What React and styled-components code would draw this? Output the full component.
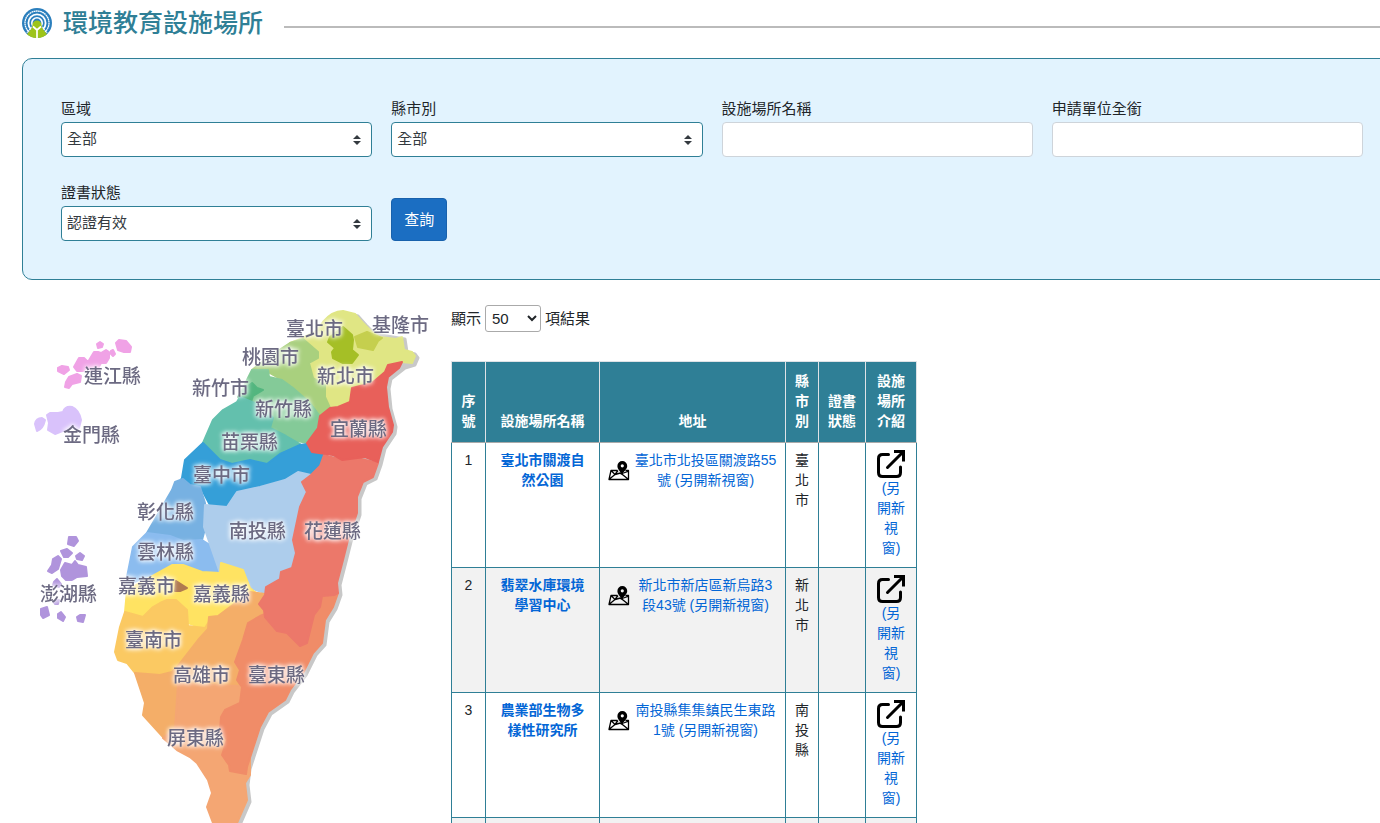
import React, { useState } from 'react'
import styled, { createGlobalStyle } from 'styled-components'

const GlobalStyle = createGlobalStyle`
  *, *::before, *::after {
    box-sizing: border-box;
  }

  body {
    margin: 0;
    overflow-x: hidden;
    background-color: #ffffff;
    color: #212529;
    font-family: "Liberation Sans", "Noto Sans CJK TC", sans-serif;
    font-size: 15px;
    line-height: 22px;
  }
`

const Page = styled.main`
  width: 100%;
  margin-left: 22px;
  padding-top: 5px;
`

const TitleBar = styled.header`
  display: flex;
  align-items: center;
  height: 36px;
  margin-bottom: 17px;
`

const Title = styled.h1`
  margin: 0 21px 0 11px;
  color: #2f7f96;
  font-size: 25px;
  font-weight: 500;
  line-height: 36px;
  white-space: nowrap;
`

const TitleRule = styled.span`
  flex: 1;
  height: 2px;
  margin-top: 8px;
  background-color: #bbbbbb;
`

const SearchPanel = styled.form`
  display: grid;
  grid-template-columns: repeat(4, 1fr);
  column-gap: 19px;
  row-gap: 24px;
  padding: 38px;
  background-color: #e2f3fe;
  border: 1px solid #2f7f96;
  border-radius: 10px;
`

const Field = styled.div`
  display: flex;
  flex-direction: column;
`

const Label = styled.label`
  margin-bottom: 1px;
  line-height: 24px;
`

const selectArrow = encodeURIComponent(
  '<svg xmlns="http://www.w3.org/2000/svg" viewBox="0 0 4 5"><path fill="#343a40" d="M2 0L0 2h4zm0 5L0 3h4z"/></svg>'
)

const Select = styled.select`
  appearance: none;
  width: 100%;
  height: 35px;
  padding: 0 28px 2px 5px;
  border: 1px solid #2f7f96;
  border-radius: 4px;
  background: #ffffff url("data:image/svg+xml,${selectArrow}") no-repeat right 10px center / 8px 10px;
  color: #343a40;
  font: inherit;
`

const Input = styled.input`
  width: 100%;
  height: 35px;
  padding: 0 10px;
  border: 1px solid #ced4da;
  border-radius: 4px;
  background-color: #ffffff;
  font: inherit;
`

const SearchButton = styled.button`
  align-self: end;
  justify-self: start;
  height: 43px;
  padding: 0 12px;
  border: 1px solid #1861ac;
  border-radius: 4px;
  background-color: #1b6ec2;
  color: #ffffff;
  font: inherit;
  cursor: pointer;

  &:hover {
    background-color: #1861ac;
  }
`

const Content = styled.section`
  display: flex;
  align-items: flex-start;
  gap: 11px;
  padding-top: 25px;
`

const MapSvg = styled.svg`
  flex: none;
  display: block;
`

const Region = styled.path`
  fill: ${props => props.$color};
  stroke: ${props => props.$color};
  stroke-width: 2;
  stroke-linejoin: round;
`

const MapLabel = styled.text`
  fill: #6c6a82;
  font-size: 19px;
  font-weight: 500;
  filter: drop-shadow(0 0 2px #ffffff) drop-shadow(0 0 2px #ffffff);
`

const LengthRow = styled.div`
  display: flex;
  align-items: center;
  gap: 4px;
  height: 27px;
  margin-bottom: 29px;
`

const LengthSelect = styled.select`
  width: 56px;
  height: 27px;
  padding: 2px;
  border: 1px solid #aaaaaa;
  border-radius: 3px;
  background-color: #ffffff;
  color: #212529;
  font: inherit;
`

const Table = styled.table`
  width: 466px;
  table-layout: fixed;
  border-collapse: collapse;
  font-size: 14px;
  line-height: 20px;
  text-align: center;
`

const Col = styled.col`
  width: ${props => props.$width}px;
`

const HeadCell = styled.th`
  padding: 9px 8px 11px;
  border: 1px solid #dee2e6;
  border-bottom-color: #aaaaaa;
  background-color: #2f7f96;
  color: #ffffff;
  font-weight: 700;
  vertical-align: bottom;
`

const Row = styled.tr`
  height: 125px;

  &:nth-child(even) {
    background-color: #f2f2f2;
  }
`

const Cell = styled.td`
  padding: 7px ${props => (props.$narrow ? 10 : 8)}px 9px;
  border: 1px solid #2f7f96;
  vertical-align: top;
`

const Link = styled.a`
  color: #0366d6;
  font-weight: ${props => (props.$strong ? 700 : 400)};
  text-decoration: none;

  &:hover {
    text-decoration: underline;
  }
`

const Address = styled.div`
  display: flex;
  gap: 4px;

  svg {
    flex: none;
    margin-top: 10px;
  }

  a {
    flex: 1;
  }
`

const OpenLink = styled(Link)`
  svg {
    display: block;
    margin: 0 auto;
  }
`

const regions = [
  ['#e0e684', 'M290 343L303 338L316 331L323 322Q332 311 343 311L355 314L363 323L372 332L380 337L396 339L402 337L404 350L412 352L415 356L412 363L402 362L394 363L385 372L373 380L372 386L352 388L351 401L338 407L330 408L325 397L325 385L313 378L310 365L318 357L315 350L302 343Z'],
  ['#a5bf26', 'M330 337L343 327L352 335L353 340L352 350L358 355L352 363L343 363L333 358L332 352L335 348L328 342Z'],
  ['#c5cf4e', 'M355 337L367 332L382 338L378 341L373 350L358 347Z'],
  ['#a9d07e', 'M252 370L267 358L290 343L303 339L318 352L318 358L309 363L313 378L325 385L325 397L330 408L318 428L300 416L282 380L268 372Z'],
  ['#84ca98', 'M238 397L243 388L252 370L268 370L269 377L282 380L293 388L310 403L319 415L318 428L307 443L293 440L270 428L272 420L250 412Z'],
  ['#53b67f', 'M243 390L252 383L257 388L263 390L253 396L251 402L243 397Z'],
  ['#63c0ad', 'M203 443L213 420L223 410L237 402L240 397L262 406L273 418L270 428L286 436L300 444L280 454L267 464L250 460L232 464L220 460Z'],
  ['#359fd8', 'M182 478L185 460L203 443L220 460L232 464L250 460L267 464L280 454L300 445L307 444L312 452L324 455L320 466L311 475L298 472L285 480L260 487L237 492L227 507L210 505L202 490L180 482Z'],
  ['#77b1e2', 'M147 533L172 490L175 482L183 479L190 485L200 487L205 503L206 525L202 540L183 542L170 537Z'],
  ['#8bbcef', 'M127 585L127 577L133 547L147 533L170 536L183 541L202 540L210 545L220 573L202 572L183 565L172 565L163 570Z'],
  ['#adcdec', 'M285 480L298 472L311 475L302 482L307 492L300 507L293 540L296 553L292 568L281 572L280 580L267 587L265 593L250 588L243 570L222 563L220 573L204 527L205 505L227 507L237 492L260 487Z'],
  ['#ffe362', 'M127 590L163 570L172 565L183 565L202 572L220 573L221 563L243 570L250 588L256 593L240 604L217 617L203 628L188 623L180 605L143 618L125 612Z'],
  ['#b07a50', 'M176 581L187 588L180 591L175 591Z'],
  ['#fbc962', 'M115 652L120 627L125 612L143 617L153 607L160 603L167 600L176 600L187 610L188 626L205 628L212 617L212 640L177 667L172 673L160 676L135 673L127 663L118 660Z'],
  ['#f4ae68', 'M135 673L160 675L172 672L177 667L198 640L208 629L209 617L218 616L230 607L250 592L265 594L268 614L250 640L243 697L175 723L178 745L163 737L143 715L145 703Z'],
  ['#f4a673', 'M178 684L240 686L250 700L250 775L245 783L247 800L237 823L237 840L215 840L213 823L207 807L212 793L208 780L197 763L190 757L177 750L163 738L175 728Z'],
  ['#f08c68', 'M265 614L300 600L335 595L338 593L333 607L325 620L322 643L313 653L303 673L290 690L285 700L268 712L260 727L247 767L246 774L230 771L229 765L222 755L227 740L220 730L221 717L225 710L240 703L242 687L237 680L240 670L235 662L243 640L248 623L260 616Z'],
  ['#ec786a', 'M324 455L342 460L353 457L378 463L373 477L363 482L357 497L357 513L348 540L343 560L337 583L338 593L334 595L322 596L320 607L314 615L307 643L300 646L287 633L277 631L265 617L264 610L259 604L265 595L266 587L280 579L281 572L292 568L296 553L293 540L300 507L307 492L302 482L311 475L320 466Z'],
  ['#e8605a', 'M402 362L399 368L388 377L386 387L388 407L393 425L392 432L382 447L378 462L365 457L342 460L333 455L312 452L307 443L318 428L320 416L330 408L338 407L350 402L352 388L372 383L385 372L388 365Z']
]

const coastline =
  'M343 311L355 314L363 323L372 332L402 337L404 350L412 352L415 356L412 363L402 366L388 377L386 387L388 407L393 425L392 432L382 447L378 463L373 477L363 482L357 497L357 513L348 540L343 560L337 583L338 593L333 607L325 620L322 643L313 653L303 673L290 690L285 700L268 712L260 727L247 767L245 783L247 800L237 823L237 840L215 840L230 760L280 600L340 420Z'

const islands = [
  // 連江縣
  ['#f0a2e6', 'M58 368L62 366L68 367L69 370L64 374L58 371ZM66 382L69 377L77 374L81 376L80 382L72 384L69 388L65 387ZM74 367L79 358L84 358L88 362L94 352L98 352L101 353L106 350L109 352L109 358L106 363L101 363L96 372L86 368L83 371L77 371ZM97 344L100 342L103 344L102 347L98 348ZM111 351L113 350L115 354L113 356L111 354ZM116 343L119 340L126 341L131 347L130 352L124 352L118 350Z'],
  // 金門縣
  ['#d9c2fb', 'M35 424Q36 418 42 418L45 420Q43 429 37 431ZM47 415L50 413L58 413L63 412Q65 406 72 407Q79 410 81 420L79 428L68 429L60 432L55 434L48 430L49 423Z'],
  // 澎湖縣
  ['#b094dc', 'M69 537L76 537L78 541L74 546L68 544ZM61 551L67 549L72 553L68 557L64 557ZM76 556L80 553L84 556L82 560L77 559ZM53 559L58 556L61 559L58 569L52 573L48 571L52 565ZM61 570L65 563L72 565L75 561L78 565L86 567L87 576L77 577L72 580L66 580L62 576ZM54 582L57 579L61 584L59 587L53 585ZM53 601L59 600L58 604L55 604ZM41 609L47 607L49 615L43 618L41 615ZM58 614L61 612L65 617L63 621L58 618ZM77 617L80 615L85 615L83 622L78 621Z']
]

const mapLabels = [
  ['臺北市', 286, 336],
  ['基隆市', 372, 332],
  ['桃園市', 242, 364],
  ['新北市', 317, 383],
  ['新竹市', 192, 395],
  ['新竹縣', 255, 416],
  ['宜蘭縣', 330, 436],
  ['苗栗縣', 221, 449],
  ['臺中市', 193, 482],
  ['彰化縣', 137, 519],
  ['南投縣', 229, 538],
  ['花蓮縣', 304, 538],
  ['雲林縣', 137, 559],
  ['嘉義市', 118, 593],
  ['嘉義縣', 193, 601],
  ['臺南市', 125, 647],
  ['高雄市', 173, 682],
  ['臺東縣', 248, 682],
  ['屏東縣', 167, 745],
  ['連江縣', 84, 383],
  ['金門縣', 63, 442],
  ['澎湖縣', 40, 601]
]

const columns = [
  { title: '序號', width: 34 },
  { title: '設施場所名稱', width: 114 },
  { title: '地址', width: 186 },
  { title: '縣市別', width: 33 },
  { title: '證書狀態', width: 47 },
  { title: '設施場所介紹', width: 51 }
]

const places = [
  { id: 1, name: '臺北市關渡自然公園', address: '臺北市北投區關渡路55號', city: '臺北市' },
  { id: 2, name: '翡翠水庫環境學習中心', address: '新北市新店區新烏路3段43號', city: '新北市' },
  { id: 3, name: '農業部生物多樣性研究所', address: '南投縣集集鎮民生東路1號', city: '南投縣' },
  { id: 4 }
]

const Logo = () => (
  <svg width="30" height="30" viewBox="0 0 30 30" aria-hidden="true">
    <circle cx="15" cy="15" r="15" fill="#2b7fbd" />
    <circle cx="15" cy="15" r="12" fill="none" stroke="#fff" strokeWidth="1.3" strokeDasharray="1.8 0.4" />
    <circle cx="15" cy="15" r="8.6" fill="none" stroke="#fff" strokeWidth="1.8" />
    <circle cx="15" cy="15" r="5.2" fill="none" stroke="#fff" strokeWidth="1.6" />
    <path d="M15 19L10.5 19.5L5 26.2A15 15 0 0 0 25 26.2L19.5 19.5Z" fill="#9dc41a" />
    <path d="M4.8 25L10 18.5M25.2 25L20 18.5" stroke="#fff" strokeWidth="1" />
    <path d="M15 12.5A4.5 4.5 0 0 0 10.5 17L9.5 21L15 20L20.5 21L19.5 17A4.5 4.5 0 0 0 15 12.5Z" fill="#9dc41a" />
    <path d="M11 18.5L15 22L19 18.5M15 21V30" fill="none" stroke="#fff" strokeWidth="1.7" />
  </svg>
)

const MapPinIcon = () => (
  <svg width="22" height="22" viewBox="0 0 22 22" aria-hidden="true">
    <path
      d="M9.5 10.5H3L1 19.5H20.5V10.5H17.5M3 10.5L7 14.5L1.5 19M7 14.5L12.5 13L20 19M7 14.5L10 10.5M12.5 14L20 11.5"
      fill="none"
      stroke="#000"
      strokeWidth="1.3"
      strokeLinejoin="round"
    />
    <path
      fillRule="evenodd"
      d="M14.3 1A4.9 4.9 0 0 0 9.4 5.9C9.4 9.2 12.2 10.7 14 15C15.8 10.7 19.2 9.2 19.2 5.9A4.9 4.9 0 0 0 14.3 1ZM14.3 4.2A1.6 1.6 0 1 1 14.3 7.4A1.6 1.6 0 1 1 14.3 4.2Z"
    />
  </svg>
)

const OpenIcon = () => (
  <svg width="28" height="28" viewBox="0 0 28 28" fill="none" stroke="#000" strokeWidth="3" aria-hidden="true">
    <path d="M11.5 4.5H5.5Q1.5 4.5 1.5 8.5V22.5Q1.5 26.5 5.5 26.5H19.5Q23.5 26.5 23.5 22.5V17" strokeLinecap="round" />
    <path d="M10.5 17.5L25.5 2.5" strokeLinecap="round" />
    <path d="M17 1.5H26.5V11.5" />
  </svg>
)

const TaiwanMap = () => (
  <MapSvg width="418" height="523" viewBox="22 305 418 523" role="img" aria-label="縣市地圖">
    <path d={coastline} fill="#c8c8c8" stroke="#c8c8c8" strokeWidth="3" strokeLinejoin="round" transform="translate(3 2)" />
    {regions.map(([color, d]) => (
      <Region key={d} $color={color} d={d} />
    ))}
    {islands.map(([color, d]) => (
      <Region key={d} $color={color} d={d} />
    ))}
    {mapLabels.map(([name, x, y]) => (
      <MapLabel key={name} x={x} y={y}>{name}</MapLabel>
    ))}
  </MapSvg>
)

export default function App() {
  const [pageSize, setPageSize] = useState('50')

  return (
    <>
      <GlobalStyle />
      <Page>
        <TitleBar>
          <Logo />
          <Title>環境教育設施場所</Title>
          <TitleRule />
        </TitleBar>

        <SearchPanel onSubmit={e => e.preventDefault()}>
          <Field>
            <Label htmlFor="area">區域</Label>
            <Select id="area">
              <option>全部</option>
            </Select>
          </Field>
          <Field>
            <Label htmlFor="city">縣市別</Label>
            <Select id="city">
              <option>全部</option>
            </Select>
          </Field>
          <Field>
            <Label htmlFor="place">設施場所名稱</Label>
            <Input id="place" type="text" />
          </Field>
          <Field>
            <Label htmlFor="unit">申請單位全銜</Label>
            <Input id="unit" type="text" />
          </Field>
          <Field>
            <Label htmlFor="status">證書狀態</Label>
            <Select id="status">
              <option>認證有效</option>
            </Select>
          </Field>
          <SearchButton type="submit">查詢</SearchButton>
        </SearchPanel>

        <Content>
          <TaiwanMap />
          <div>
            <LengthRow>
              <label htmlFor="length">顯示</label>
              <LengthSelect id="length" value={pageSize} onChange={e => setPageSize(e.target.value)}>
                <option>50</option>
              </LengthSelect>
              <span>項結果</span>
            </LengthRow>

            <Table>
              <colgroup>
                {columns.map(col => (
                  <Col key={col.title} $width={col.width} />
                ))}
              </colgroup>
              <thead>
                <tr>
                  {columns.map(col => (
                    <HeadCell key={col.title} scope="col">{col.title}</HeadCell>
                  ))}
                </tr>
              </thead>
              <tbody>
                {places.map(place => (
                  <Row key={place.id}>
                    <Cell>{place.name && place.id}</Cell>
                    <Cell>
                      {place.name && <Link href="#" $strong>{place.name}</Link>}
                    </Cell>
                    <Cell>
                      {place.address && (
                        <Address>
                          <MapPinIcon />
                          <Link href="#">{`${place.address} (另開新視窗)`}</Link>
                        </Address>
                      )}
                    </Cell>
                    <Cell>{place.city}</Cell>
                    <Cell />
                    <Cell $narrow>
                      {place.name && (
                        <OpenLink href="#">
                          <OpenIcon />
                          (另開新視窗)
                        </OpenLink>
                      )}
                    </Cell>
                  </Row>
                ))}
              </tbody>
            </Table>
          </div>
        </Content>
      </Page>
    </>
  )
}
